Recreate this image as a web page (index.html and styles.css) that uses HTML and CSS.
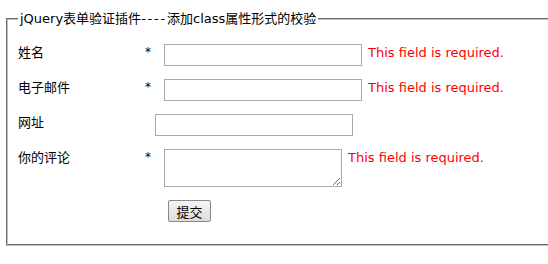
FILE: index.html
```html
<!DOCTYPE html>
<html lang="zh-CN">
<head>
<meta charset="utf-8">
<title>jQuery表单验证插件</title>
<link rel="stylesheet" href="styles.css">
</head>
<body>
<form class="form">
  <fieldset class="box">
    <legend class="legend">jQuery表单验证插件<span class="dash">----</span>添加class属性形式的校验</legend>
    <div class="row">
      <label class="label" for="cname">姓名</label>
      <span class="star">*</span>
      <input class="field" id="cname" type="text">
      <span class="error">This field is required.</span>
    </div>
    <div class="row">
      <label class="label" for="cemail">电子邮件</label>
      <span class="star">*</span>
      <input class="field" id="cemail" type="text">
      <span class="error">This field is required.</span>
    </div>
    <div class="row">
      <label class="label" for="curl">网址</label>
      <input class="field" id="curl" type="text">
    </div>
    <div class="row">
      <label class="label" for="ccomment">你的评论</label>
      <span class="star">*</span>
      <textarea class="area" id="ccomment"></textarea>
      <span class="error">This field is required.</span>
    </div>
    <div class="row submit-row">
      <button class="submit" type="button">提交</button>
    </div>
  </fieldset>
</form>
</body>
</html>
```
FILE: styles.css
```css
html, body {
  margin: 0;
  padding: 0;
  background: #fff;
}
body {
  font-family: "DejaVu Sans", "Noto Sans CJK SC", sans-serif;
  font-size: 13px;
  color: #000;
}
.form {
  margin: 0;
}
.box {
  box-sizing: border-box;
  margin: 10px 0 0 6px;
  width: 542px;
  min-width: 0;
  padding: 17px 10px 22px 10px;
  border: 2px groove #c0c0c0;
  border-right: none;
}
.legend {
  padding: 0 2px;
  font-size: 13px;
  line-height: 17px;
}
.dash {
  letter-spacing: 1.8px;
}
.row {
  display: flex;
  align-items: flex-start;
  margin-bottom: 13px;
}
.label {
  width: 127px;
  flex: none;
  line-height: 17px;
}
.star {
  width: 9px;
  flex: none;
  line-height: 17px;
  font-size: 12px;
}
.field {
  box-sizing: border-box;
  width: 198px;
  height: 22px;
  margin: 0 0 0 10px;
  padding: 1px 3px;
  border: 1px solid #a9a9a9;
  font: inherit;
}
.area {
  box-sizing: border-box;
  width: 178px;
  height: 38px;
  margin: 0 0 0 10px;
  padding: 2px;
  border: 1px solid #a9a9a9;
  font: inherit;
}
.error {
  margin-left: 6px;
  line-height: 17px;
  color: #f00;
  white-space: nowrap;
}
.submit-row {
  margin-bottom: 0;
}
.submit {
  margin-left: 150px;
  box-sizing: border-box;
  width: 43px;
  height: 22px;
  padding: 0;
  border: 1px solid #8a8a8a;
  border-radius: 2px;
  background: linear-gradient(#f6f6f6, #dcdcdc);
  font: inherit;
  color: #000;
}
```
